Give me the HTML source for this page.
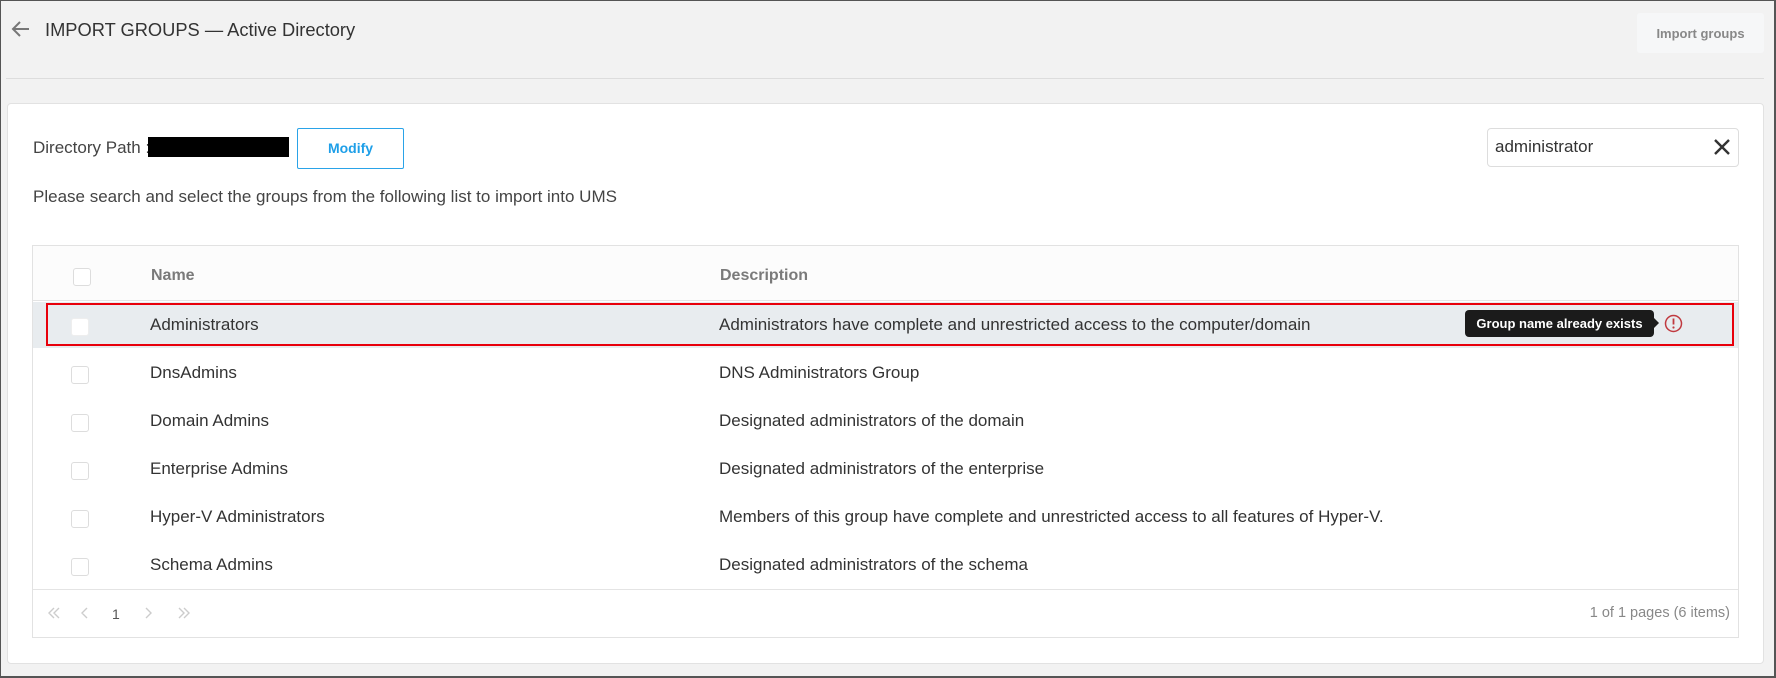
<!DOCTYPE html>
<html><head><meta charset="utf-8"><style>
*{box-sizing:border-box;margin:0;padding:0}
body{width:1776px;height:678px;background:#f2f2f2;font-family:"Liberation Sans",sans-serif;position:relative;overflow:hidden;color:#333}
.a{position:absolute}
.frame{left:0;top:0;width:1776px;height:678px;border:1px solid #555;border-right:2px solid #555;border-bottom:2px solid #555}
.t{white-space:nowrap;line-height:1}
.cb{position:absolute;width:18px;height:18px;border:1px solid #ddd;border-radius:3px;background:#fff}
.row{position:absolute;left:150px;font-size:17px;color:#333}
.desc{position:absolute;left:719px;font-size:17px;color:#333}
</style></head><body>
<div class="a frame"></div>
<svg class="a" style="left:10px;top:20px" width="20" height="18" viewBox="0 0 20 18"><path d="M19 9H3M10 2L3 9l7 7" fill="none" stroke="#777" stroke-width="2"/></svg>
<div class="a t" style="left:45px;top:21px;font-size:18.3px;color:#333">IMPORT GROUPS — Active Directory</div>
<div class="a" style="left:1637px;top:13px;width:127px;height:40px;background:#f6f7f8;border-radius:3px"></div>
<div class="a t" style="left:1637px;top:27px;width:127px;text-align:center;font-size:13px;font-weight:bold;color:#888">Import groups</div>
<div class="a" style="left:6px;top:78px;width:1758px;height:1px;background:#ddd"></div>
<div class="a" style="left:7px;top:103px;width:1757px;height:561px;background:#fff;border:1px solid #e2e2e2;border-radius:4px"></div>
<div class="a t" style="left:33px;top:139px;font-size:17px;color:#444">Directory Path :</div>
<div class="a" style="left:148px;top:137px;width:141px;height:20px;background:#000"></div>
<div class="a" style="left:297px;top:128px;width:107px;height:41px;border:1px solid #2aa3e8;border-radius:2px"></div>
<div class="a t" style="left:297px;top:141px;width:107px;text-align:center;font-size:14px;font-weight:bold;color:#1e9fe8">Modify</div>
<div class="a t" style="left:33px;top:188px;font-size:17px;color:#444">Please search and select the groups from the following list to import into UMS</div>
<div class="a" style="left:1487px;top:128px;width:252px;height:39px;border:1px solid #ddd;border-radius:4px"></div>
<div class="a t" style="left:1495px;top:138px;font-size:17px;color:#333">administrator</div>
<svg class="a" style="left:1713px;top:138px" width="18" height="18" viewBox="0 0 18 18"><path d="M2 2L16 16M16 2L2 16" stroke="#333" stroke-width="2.4"/></svg>
<div class="a" style="left:32px;top:245px;width:1707px;height:393px;border:1px solid #e2e2e2;background:#fff"></div>
<div class="a" style="left:33px;top:246px;width:1705px;height:55px;background:#fcfcfc;border-bottom:1px solid #e4e4e4"></div>
<div class="cb" style="left:73px;top:268px"></div>
<div class="a t" style="left:151px;top:268px;font-size:16px;font-weight:bold;color:#7a7a7a">Name</div>
<div class="a t" style="left:720px;top:268px;font-size:16px;font-weight:bold;color:#7a7a7a">Description</div>
<div class="a" style="left:33px;top:302px;width:1705px;height:46px;background:#e8ecef"></div>
<div class="a" style="left:46px;top:303px;width:1688px;height:43px;border:2px solid #e8000b"></div>
<div class="cb" style="left:71px;top:318px;border-color:#eee"></div>
<div class="row t" style="top:316px">Administrators</div>
<div class="desc t" style="top:316px">Administrators have complete and unrestricted access to the computer/domain</div>
<div class="a" style="left:1465px;top:310px;width:189px;height:27px;background:#1b1b1b;border-radius:4px"></div>
<div class="a" style="left:1653px;top:317px;width:0;height:0;border-top:6px solid transparent;border-bottom:6px solid transparent;border-left:6px solid #1b1b1b"></div>
<div class="a t" style="left:1465px;top:317px;width:189px;text-align:center;font-size:13px;font-weight:bold;color:#fff">Group name already exists</div>
<svg class="a" style="left:1664px;top:314px" width="19" height="19" viewBox="0 0 19 19"><circle cx="9.5" cy="9.5" r="8" fill="none" stroke="#c0393f" stroke-width="1.5"/><path d="M9.5 4.5v6" stroke="#c0393f" stroke-width="1.8"/><circle cx="9.5" cy="13.5" r="1.1" fill="#c0393f"/></svg>
<div class="cb" style="left:71px;top:366px"></div><div class="row t" style="top:364px">DnsAdmins</div><div class="desc t" style="top:364px">DNS Administrators Group</div>
<div class="cb" style="left:71px;top:414px"></div><div class="row t" style="top:412px">Domain Admins</div><div class="desc t" style="top:412px">Designated administrators of the domain</div>
<div class="cb" style="left:71px;top:462px"></div><div class="row t" style="top:460px">Enterprise Admins</div><div class="desc t" style="top:460px">Designated administrators of the enterprise</div>
<div class="cb" style="left:71px;top:510px"></div><div class="row t" style="top:508px">Hyper-V Administrators</div><div class="desc t" style="top:508px">Members of this group have complete and unrestricted access to all features of Hyper-V.</div>
<div class="cb" style="left:71px;top:558px"></div><div class="row t" style="top:556px">Schema Admins</div><div class="desc t" style="top:556px">Designated administrators of the schema</div>
<div class="a" style="left:33px;top:589px;width:1705px;height:1px;background:#e4e4e4"></div>
<svg class="a" style="left:46px;top:605px" width="160" height="16" viewBox="0 0 160 16" fill="none" stroke="#ccc" stroke-width="1.4"><path d="M8 3L3 8l5 5M13 3L8 8l5 5M41 3L36 8l5 5M100 3l5 5-5 5M133 3l5 5-5 5M138 3l5 5-5 5"/></svg>
<div class="a t" style="left:112px;top:607px;font-size:14px;color:#555">1</div>
<div class="a t" style="left:1530px;top:606px;width:200px;text-align:right;font-size:14.5px;color:#888">1 of 1 pages (6 items)</div>
</body></html>
